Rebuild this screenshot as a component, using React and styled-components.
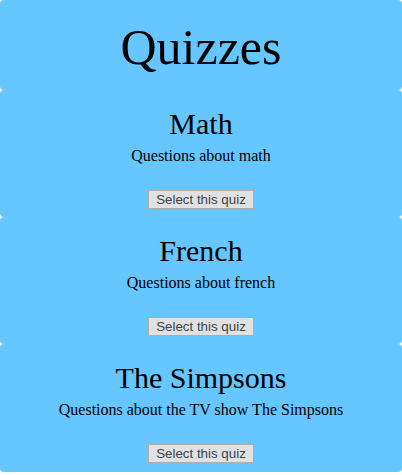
import React from 'react'
import styled, { createGlobalStyle } from 'styled-components'

const GlobalStyle = createGlobalStyle`
  html, body {
    margin: 0;
    padding: 0;
    background: #ffffff;
    font-family: "Liberation Serif", "Times New Roman", serif;
    color: #000000;
  }
`

const Page = styled.main`
  width: 100%;
  display: flex;
  flex-direction: column;
`

const Block = styled.section`
  background-color: #66c6ff;
  border-radius: 4px;
  text-align: center;
  display: flex;
  flex-direction: column;
  align-items: center;
`

const Header = styled(Block)`
  height: 90px;
  box-sizing: border-box;
  padding-top: 19px;
`

const Title = styled.h1`
  margin: 0;
  font-size: 50px;
  font-weight: normal;
  line-height: 56px;
`

const Card = styled(Block)`
  height: ${p => (p.$last ? 128 : 127)}px;
  box-sizing: border-box;
  padding-top: 16px;
`

const Name = styled.h2`
  margin: 0;
  font-size: 30px;
  font-weight: normal;
  line-height: 35px;
`

const Description = styled.p`
  margin: 6px 0 0;
  font-size: 16px;
  line-height: 18px;
`

const SelectButton = styled.button`
  margin-top: 25px;
  height: 19px;
  box-sizing: border-box;
  padding: 0 7px;
  font-family: "Liberation Sans", Arial, sans-serif;
  font-size: 13.33px;
  line-height: 15px;
  color: #3a4448;
  background: #e1e1e1;
  border: 1px solid #adadad;
  border-radius: 0;
  cursor: pointer;
`

const quizzes = [
  { name: 'Math', description: 'Questions about math' },
  { name: 'French', description: 'Questions about french' },
  { name: 'The Simpsons', description: 'Questions about the TV show The Simpsons' },
]

const App = () => {
  return <>
    <GlobalStyle />
    <Page>
      <Header>
        <Title>Quizzes</Title>
      </Header>
      {quizzes.map((quiz, i) => (
        <Card key={quiz.name} $last={i === quizzes.length - 1}>
          <Name>{quiz.name}</Name>
          <Description>{quiz.description}</Description>
          <SelectButton>Select this quiz</SelectButton>
        </Card>
      ))}
    </Page>
  </>
}

export default App
